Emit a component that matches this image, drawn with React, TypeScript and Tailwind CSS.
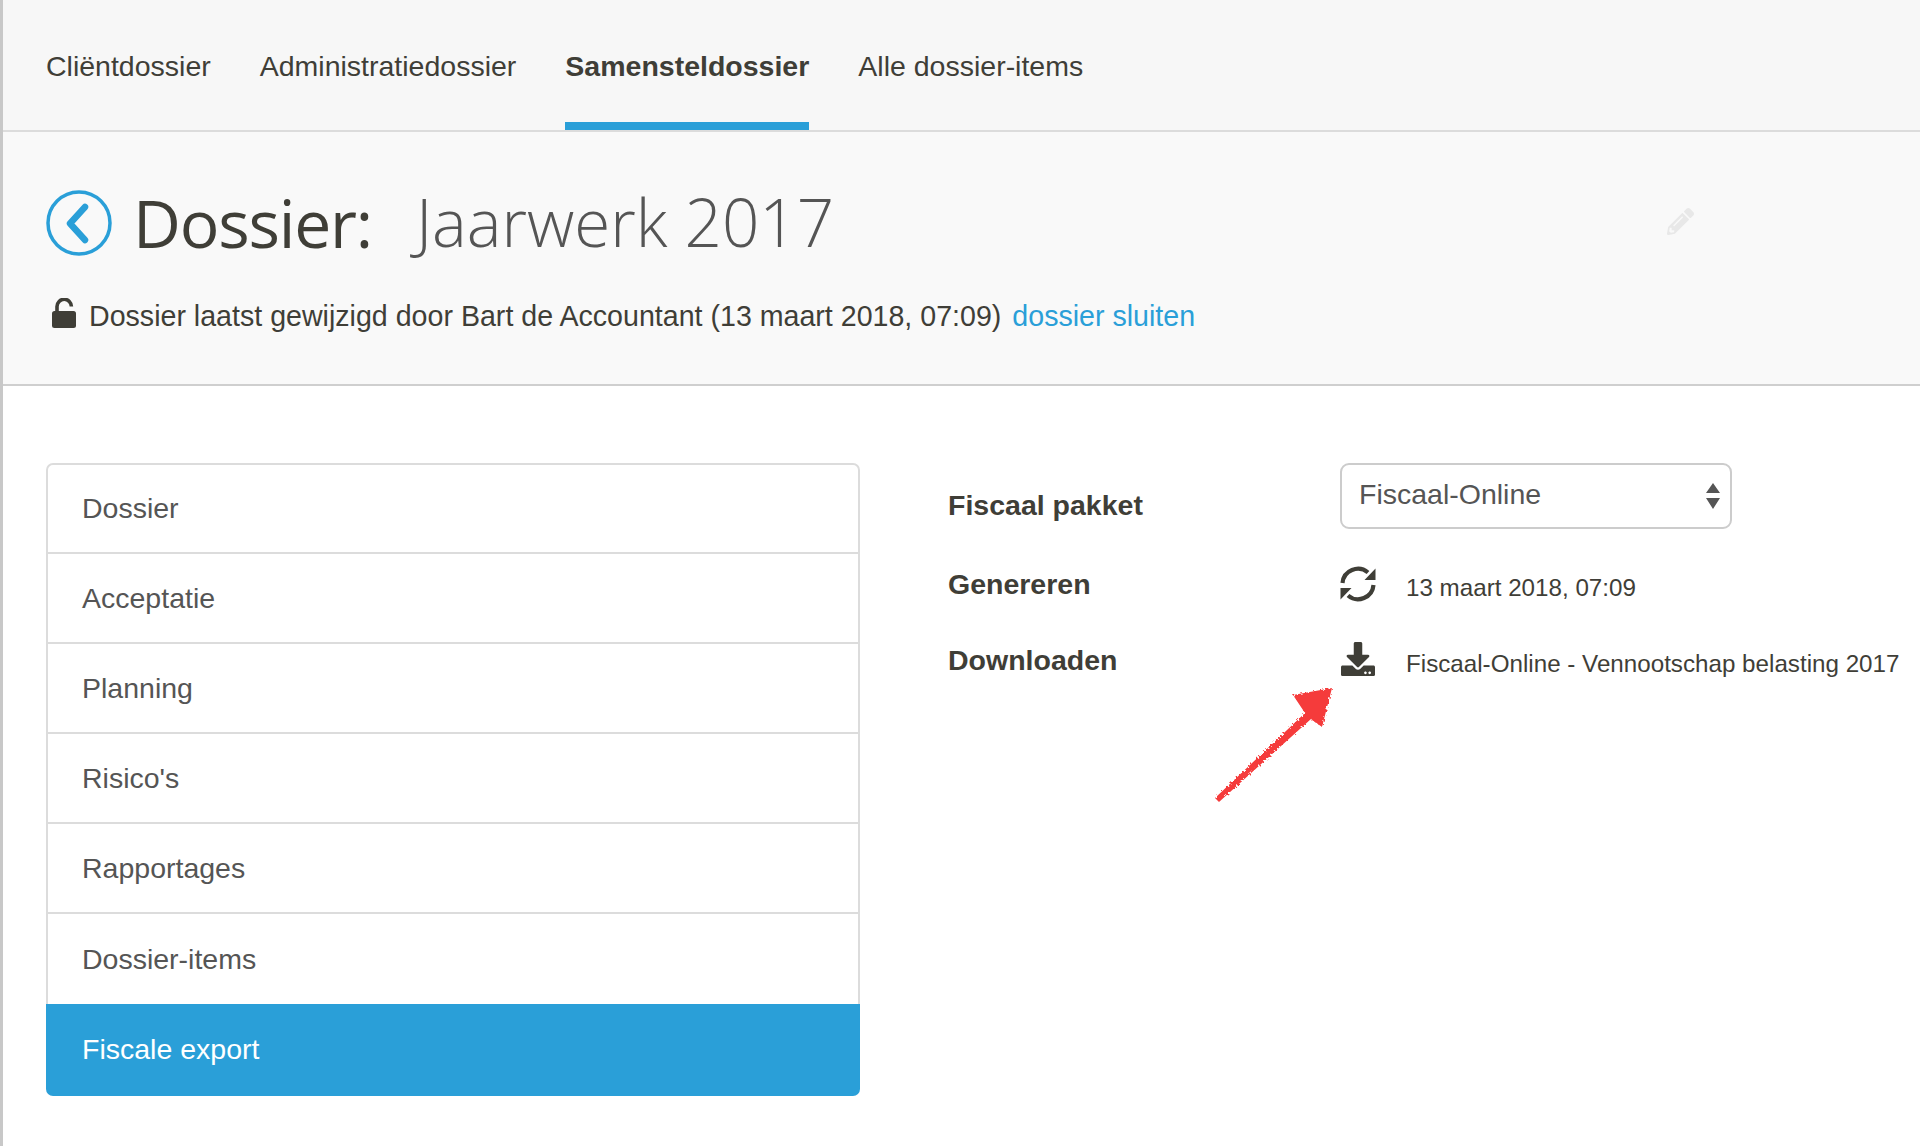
import { FaDownload, FaPencilAlt } from "react-icons/fa";

const items = ["Dossier", "Acceptatie", "Planning", "Risico's", "Rapportages"];

export default function App() {
  return (
    <div className="relative h-[1146px] w-[1920px] overflow-hidden border-l-[3px] border-[#c8c8c8] bg-white font-['Liberation_Sans',sans-serif] text-[#3f3e37]">
      <nav className="flex h-[132px] items-stretch gap-[49px] border-b-2 border-[#dcdcdc] bg-[#f7f7f7] pl-[43px] text-[28.5px]">
        <a className="pt-[45px]">Cliëntdossier</a>
        <a className="pt-[45px]">Administratiedossier</a>
        <a className="border-b-[8px] border-[#2a9fd8] pt-[45px] font-bold">Samensteldossier</a>
        <a className="pt-[45px]">Alle dossier-items</a>
      </nav>

      <header className="relative h-[254px] border-b-2 border-[#cfcfcf] bg-[#f9f9f9] pl-[43px]">
        <div className="flex items-center pt-[58px] font-['Open_Sans',sans-serif]">
          <svg width="66" height="66" viewBox="0 0 66 66" className="shrink-0" fill="none" stroke="#2a9fd8">
            <circle cx="33" cy="33" r="31" strokeWidth="3.5" />
            <path d="M39 17 L24 33.5 L39 50" strokeWidth="6.5" strokeLinecap="round" strokeLinejoin="round" />
          </svg>
          <h1 className="mb-[2px] ml-[21px] text-[66px] leading-[64px] tracking-[-1.2px]">Dossier:</h1>
          <span className="mb-[2px] ml-[44px] text-[65.5px] font-light leading-[64px] text-[#555]">Jaarwerk 2017</span>
        </div>
        <div className="mt-[39px] flex items-center text-[28.6px]">
          <svg width="24" height="30" viewBox="0 0 24 30" className="mb-[6px] ml-[6px] shrink-0" fill="#3f3e37">
            <rect x="0" y="13" width="24" height="17" rx="2.5" />
            <path d="M5 14 V8.5 a7.2 7.2 0 0 1 14.4 0" fill="none" stroke="#3f3e37" strokeWidth="3.6" />
          </svg>
          <span className="ml-[13px]">Dossier laatst gewijzigd door Bart de Accountant (13 maart 2018, 07:09)</span>
          <a className="ml-[11px] text-[#2a9fd8]">dossier sluiten</a>
        </div>
        <FaPencilAlt className="absolute left-[1664px] top-[76px] h-[27px] w-[27px] text-[#e8e8e8]" />
      </header>

      <div className="flex pl-[43px] pt-[77px]">
        <ul className="w-[814px] text-[28.5px] text-[#555]">
          {items.map((item, i) => (
            <li
              key={item}
              className={
                i === 0
                  ? "flex h-[91px] items-center rounded-t-[7px] border-2 border-[#dcdcdc] pl-[34px]"
                  : "flex h-[90px] items-center border-x-2 border-b-2 border-[#dcdcdc] pl-[34px]"
              }
            >
              {item}
            </li>
          ))}
          <li className="flex h-[90px] items-center border-x-2 border-[#dcdcdc] pl-[34px]">Dossier-items</li>
          <li className="flex h-[92px] items-center rounded-b-[7px] bg-[#2a9fd8] pb-[1px] pl-[36px] text-white">Fiscale export</li>
        </ul>

        <div className="ml-[88px] flex-1">
          <div className="flex h-[66px] items-start">
            <div className="w-[392px] pt-[26px] text-[28.5px] font-bold leading-[32px]">Fiscaal pakket</div>
            <div className="flex h-[66px] w-[392px] items-center justify-between rounded-[9px] border-2 border-[#cccccc] pb-[4px] pl-[17px] pr-[10px] text-[28.5px] text-[#555]">
              <span>Fiscaal-Online</span>
              <svg width="14" height="26" viewBox="0 0 14 26" fill="#555" className="mt-[4px]">
                <path d="M7 0 L14 10 L0 10 Z M0 15 L14 15 L7 26 Z" />
              </svg>
            </div>
          </div>
          <div className="mt-[37px] flex items-start">
            <div className="w-[392px] pt-[2px] text-[28.5px] font-bold leading-[32px]">Genereren</div>
            <svg width="36" height="36" viewBox="0 0 36 36" className="shrink-0" fill="#3f3e37">
              <path d="M2.5 17 A15.5 15.5 0 0 1 28 6.5" fill="none" stroke="#3f3e37" strokeWidth="4.2" />
              <path d="M33.5 19 A15.5 15.5 0 0 1 8 29.5" fill="none" stroke="#3f3e37" strokeWidth="4.2" />
              <path d="M35.5 2.5 L35.5 14 L24.5 14 Z M0.5 33.5 L0.5 22 L11.5 22 Z" />
            </svg>
            <span className="ml-[30px] pt-[6px] text-[24.2px] leading-[32px]">13 maart 2018, 07:09</span>
          </div>
          <div className="mt-[38px] flex items-start">
            <div className="w-[392px] pt-[2px] text-[28.5px] font-bold leading-[32px]">Downloaden</div>
            <FaDownload className="mx-[1px] h-[34px] w-[34px] shrink-0" />
            <span className="ml-[30px] whitespace-nowrap pt-[6px] text-[24.2px] leading-[32px]">Fiscaal-Online - Vennootschap belasting 2017</span>
          </div>
        </div>
      </div>

      {/* rode pijl, over de inhoud heen */}
      <svg className="absolute left-[1205px] top-[680px]" width="135" height="130" viewBox="0 0 135 130" fill="#f53b3b">
        <defs>
          <filter id="krijt" x="-10%" y="-10%" width="120%" height="120%">
            <feTurbulence type="fractalNoise" baseFrequency="0.5" numOctaves="2" seed="3" />
            <feDisplacementMap in="SourceGraphic" scale="4" />
          </filter>
        </defs>
        <path d="M7 118 L97 33 L85 15 L124 8 L114 47 L103 39 L11 122 Z" filter="url(#krijt)" />
      </svg>
    </div>
  );
}
